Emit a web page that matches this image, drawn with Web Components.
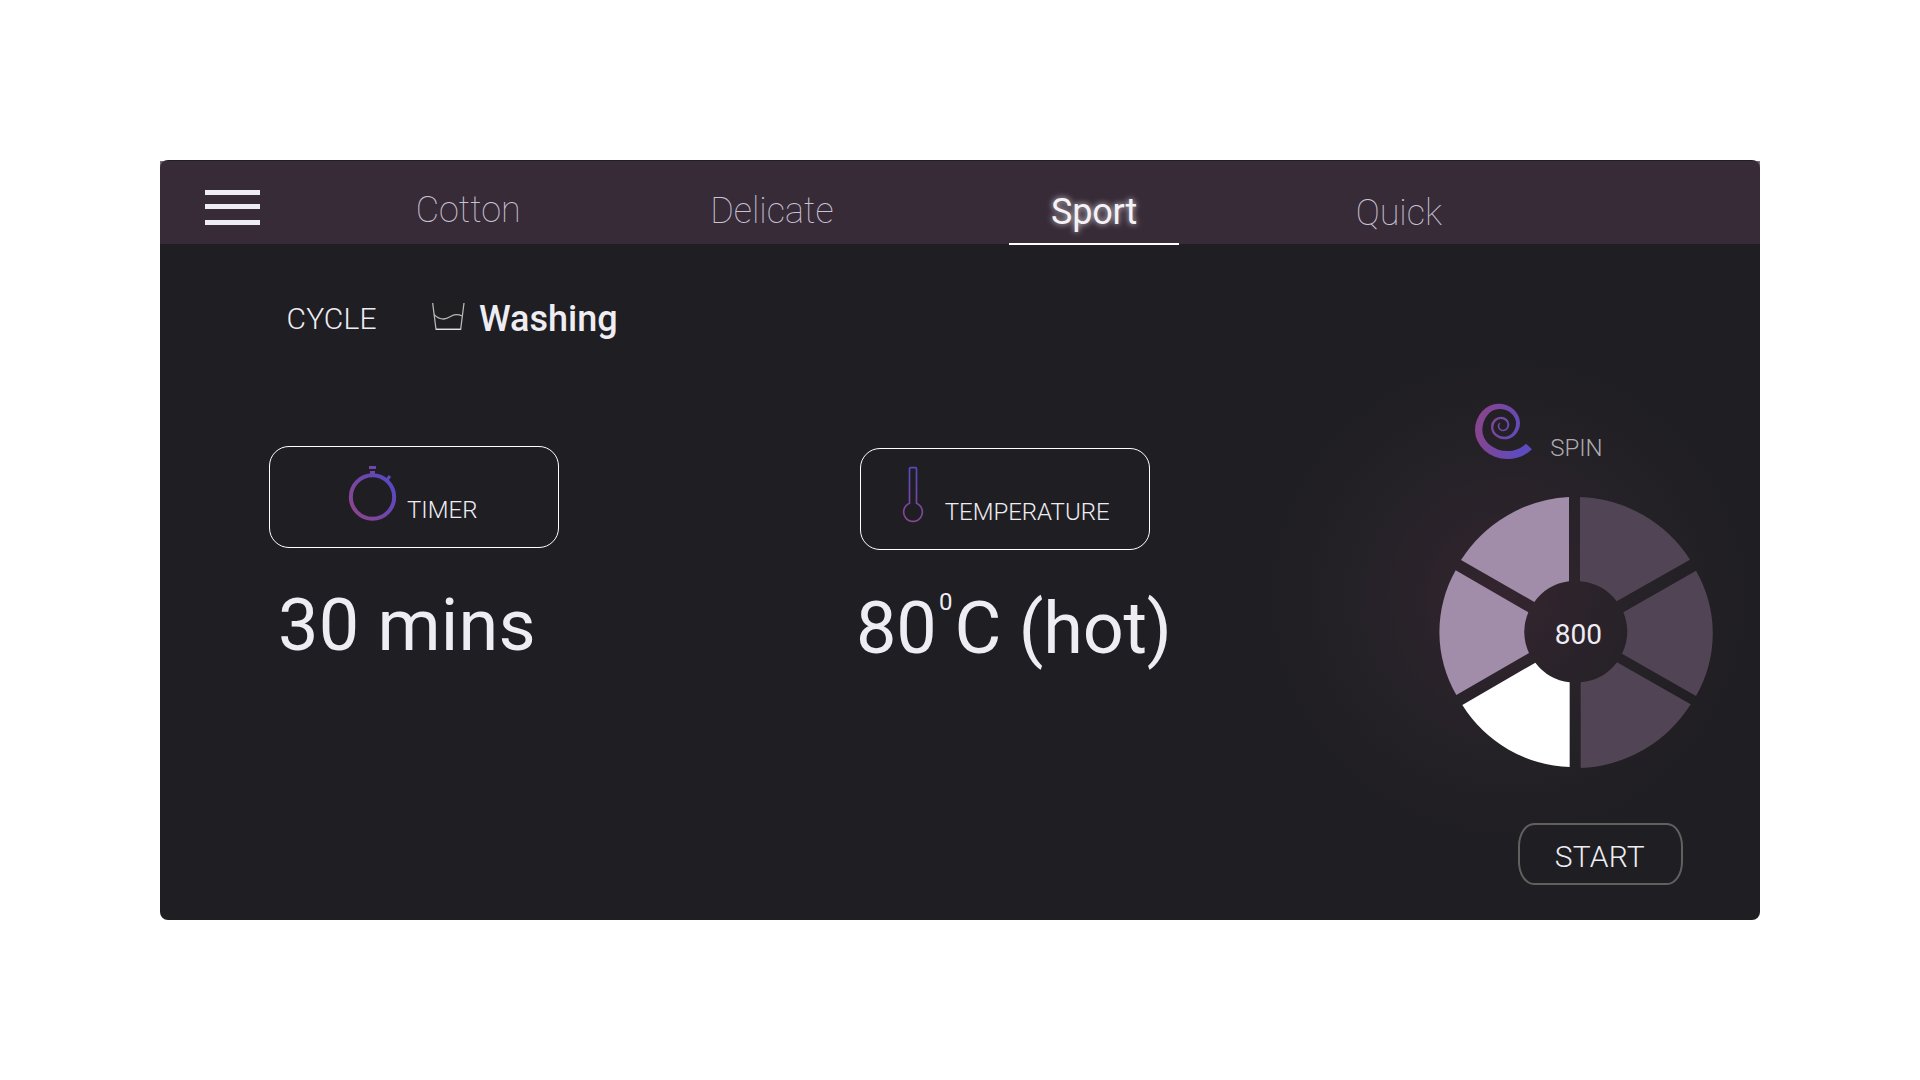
<!DOCTYPE html>
<html lang="en">
<head>
<meta charset="utf-8">
<title>Washing machine</title>
<style>
  body { margin: 0; min-height: 1080px; background: #fff; display: grid; place-items: center; font-family: Roboto, "Liberation Sans", sans-serif; }
</style>
</head>
<body>
<washer-panel></washer-panel>
<script>
const define = (name, html) => {
  const tpl = document.createElement('template');
  tpl.innerHTML = html;
  customElements.define(name, class extends HTMLElement {
    constructor() {
      super();
      this.attachShadow({ mode: 'open' }).append(tpl.content.cloneNode(true));
    }
  });
};

define('menu-button', `
<style>
  :host { display: flex; flex-direction: column; width: 55px; }
  i { display: block; height: 5px; background: #eeedf3; }
  i + i { margin-top: 9px; }
  i + i + i { margin-top: 11px; }
</style><i></i><i></i><i></i>`);

define('program-tab', `
<style>
  :host { display: block; box-sizing: border-box; height: 84px; font-size: 36px; font-weight: 130; line-height: 42px; color: #c8c4d6; white-space: nowrap; }
  :host([active]) { width: 170px; text-align: center; font-weight: 380; letter-spacing: -.2px; color: #f4f2f7; border-bottom: 2px solid #fff; text-shadow: 0 0 6px rgba(255,255,255,.8); }
</style><slot></slot>`);

define('top-bar', `
<style>
  :host { display: flex; align-items: flex-start; box-sizing: border-box; height: 83px; margin-top: 1px; padding-left: 45px; background: rgba(66,49,65,.72); }
  menu-button { margin-top: 29px; }
  .cotton { padding-top: 28px; margin-left: 155.7px; width: 294.5px; }
  .delicate { padding-top: 29px; width: 298.8px; }
  .sport { padding-top: 30px; }
  .quick { padding-top: 31px; margin-left: 176.7px; }
</style>
<menu-button></menu-button>
<program-tab class="cotton">Cotton</program-tab>
<program-tab class="delicate">Delicate</program-tab>
<program-tab class="sport" active>Sport</program-tab>
<program-tab class="quick">Quick</program-tab>`);

define('wash-icon', `
<style>:host { display: block; } svg { display: block; }</style>
<svg width="36" height="32" viewBox="510 60 108 96" fill="none" stroke="#b9b7b6" stroke-width="3.8">
  <path d="M518 69L528 148H602L612 69"/><path d="M528 148H602" stroke="#e4e3e6"/>
  <path d="M522 103C530 112 540 117 551 117C567 117 573 104 588 104C596 104 601 105 607 108"/>
</svg>`);

define('timer-icon', `
<style>:host { display: block; } svg { display: block; }</style>
<svg width="50" height="58" viewBox="279 105 150 174">
  <defs>
    <linearGradient id="g" gradientUnits="userSpaceOnUse" x1="295" y1="245" x2="412" y2="165"><stop stop-color="#8a4590"/><stop offset="1" stop-color="#5a48c0"/></linearGradient>
    <linearGradient id="c" gradientUnits="userSpaceOnUse" x1="340" y1="0" x2="365" y2="0"><stop stop-color="#8a4590"/><stop offset="1" stop-color="#5a48c0"/></linearGradient>
  </defs>
  <circle cx="352.5" cy="201" r="65" fill="none" stroke="url(#g)" stroke-width="12"/>
  <path d="M345 123H360V134H345Z" fill="#6a48b0"/>
  <path d="M342 108H363V117H342Z" fill="url(#c)"/>
  <path d="M394 152L405 138" stroke="#5f49bb" stroke-width="9"/>
</svg>`);

define('thermometer-icon', `
<style>:host { display: block; } svg { display: block; }</style>
<svg width="24" height="59" viewBox="168 105 72 177">
  <defs><linearGradient id="g" gradientUnits="userSpaceOnUse" x1="186" y1="270" x2="222" y2="130"><stop stop-color="#8a4590"/><stop offset="1" stop-color="#5a48c0"/></linearGradient></defs>
  <path d="M193.500 220V116Q193.500 113 196.500 113H211.500Q214.500 113 214.500 116V220A28 28 0 1 1 193.500 220Z" fill="none" stroke="url(#g)" stroke-width="5"/>
</svg>`);

define('spiral-icon', `
<style>:host { display: block; } svg { display: block; }</style>
<svg width="59" height="58" viewBox="162 66 177 174">
  <defs><linearGradient id="g" gradientUnits="userSpaceOnUse" x1="175" y1="160" x2="310" y2="190"><stop stop-color="#86458f"/><stop offset="1" stop-color="#5d4bc0"/></linearGradient></defs>
  <path fill="url(#g)" d="M336 208C316 227 290 237 262 237A97 87 0 0 1 165 150A71 79 0 0 1 236 71A64 59 0 0 1 300 130A48 48 0 0 1 252 178A39 38 0 0 1 213 140A30 30 0 0 1 243 110A25 23 0 0 1 268 133A18 21 0 0 1 250 154A17 17 0 0 1 233 137Q233 131 239 128L241 130Q238 132 238 138A12 11 0 0 0 250 149A12 15 0 0 0 262 134A19 17 0 0 0 243 117A23 25 0 0 0 220 142A33 28 0 0 0 253 170A35 40 0 0 0 288 130A50 43 0 0 0 238 87A51 63 0 0 0 187 150A75 63 0 0 0 262 213C284 213 302 206 318 191Z"/>
</svg>`);

define('cycle-row', `
<style>
  :host { display: flex; align-items: flex-start; white-space: nowrap; }
  .label { width: 143.500px; margin-top: 3px; font-size: 30px; font-weight: 300; line-height: 35px; letter-spacing: .15px; color: #eeedf3; }
  wash-icon { margin-top: 2px; }
  .value { margin-left: 13px; font-size: 36px; font-weight: 500; line-height: 42px; color: #eeedf3; }
</style>
<span class="label"><slot name="label"></slot></span><wash-icon></wash-icon><span class="value"><slot></slot></span>`);

define('setting-card', `
<style>
  :host { display: block; width: 290px; color: #eeedf3; white-space: nowrap; }
  .box { display: flex; align-items: flex-start; box-sizing: border-box; height: 102px; border: 1px solid #fff; border-radius: 20px; padding: var(--card-pad); gap: var(--card-gap); }
  .label { font-size: 24px; font-weight: 300; line-height: 28px; margin-top: var(--label-top); }
  .value { display: flex; align-items: flex-start; margin: var(--value-top) 0 0 var(--value-left); font-size: 72px; line-height: 85px; letter-spacing: var(--value-spacing); }
</style>
<div class="box"><slot name="icon"></slot><span class="label"><slot name="label"></slot></span></div>
<div class="value"><slot></slot></div>`);

define('spin-wheel', `
<style>
  :host { display: grid; width: 276px; height: 275px; }
  svg { grid-area: 1 / 1; display: block; }
  span { grid-area: 1 / 1; margin: 123px 0 0 116.700px; font-size: 28px; line-height: 33px; color: #eeedf3; }
</style>
<svg width="276" height="275" viewBox="54 45 828 825">
  <g fill="#a18da9">
    <path d="M447 51A409 409 0 0 0 123 240L343 366A153 153 0 0 1 447 304Z"/>
    <path d="M107 271A376 376 0 0 0 109 645L327 519A153 153 0 0 1 325 397Z"/>
  </g>
  <path fill="#fff" d="M127 675L346 548A153 153 0 0 0 449 607V861A395 395 0 0 1 127 675Z"/>
  <g fill="#514454">
    <path d="M480 51A409 409 0 0 1 810 239L590 364A153 153 0 0 0 480 304Z"/>
    <path d="M828 272A376 376 0 0 1 828 648L606 521A153 153 0 0 0 610 397Z"/>
    <path d="M812 673A409 409 0 0 1 482 864V607A153 153 0 0 0 591 547Z"/>
  </g>
</svg><span><slot></slot></span>`);

define('spin-control', `
<style>
  :host { display: block; width: 276px; }
  .head { display: flex; align-items: flex-start; height: 93px; padding-left: 36px; }
  .head span { margin: 32px 0 0 17.200px; font-size: 24px; font-weight: 300; line-height: 28px; color: #adabb0; }
</style>
<div class="head"><spiral-icon></spiral-icon><span><slot name="label"></slot></span></div>
<spin-wheel><slot></slot></spin-wheel>`);

define('start-button', `
<style>
  :host { display: block; box-sizing: border-box; width: 165px; height: 62px; border: 2px solid #60605f; border-radius: 16px / 23px; padding: 14px 0 0 34.700px; font-size: 30px; font-weight: 300; line-height: 35px; letter-spacing: .25px; color: #eeedf3; }
</style><slot></slot>`);

define('washer-panel', `
<style>
  :host { display: flex; flex-direction: column; width: 1600px; height: 760px; border-radius: 8px;
    background: radial-gradient(circle 248px at 1348px 438px, #34252f 0, #2c232b 30%, #242127 62%, rgba(31,30,34,0) 100%), #1f1e22; }
  cycle-row { margin: 54px 0 0 126.500px; }
  .controls { display: flex; align-items: flex-start; margin-top: 62px; padding-left: 109px; }
  .timer { margin-top: 44px; --card-pad: 18px 0 0 78px; --card-gap: 9px; --label-top: 31px; --value-top: 35px; --value-left: 9px; --value-spacing: .2px; }
  .temp { margin: 46px 0 0 301px; --card-pad: 16px 0 0 40px; --card-gap: 19.700px; --label-top: 33px; --value-top: 36px; --value-left: -4px; --value-spacing: -.2px; }
  .right { margin-left: 288px; }
  start-button { margin: 53px 0 0 80px; }
  sup { font-size: 24px; line-height: 28px; margin: 2px 2.200px 0 2.400px; }
</style>
<top-bar></top-bar>
<cycle-row><span slot="label">CYCLE</span>Washing</cycle-row>
<div class="controls">
  <setting-card class="timer"><timer-icon slot="icon"></timer-icon><span slot="label">TIMER</span>30 mins</setting-card>
  <setting-card class="temp"><thermometer-icon slot="icon"></thermometer-icon><span slot="label">TEMPERATURE</span><span>80</span><sup>0</sup><span>C (hot)</span></setting-card>
  <div class="right">
    <spin-control><span slot="label">SPIN</span>800</spin-control>
    <start-button>START</start-button>
  </div>
</div>`);
</script>
</body>
</html>
